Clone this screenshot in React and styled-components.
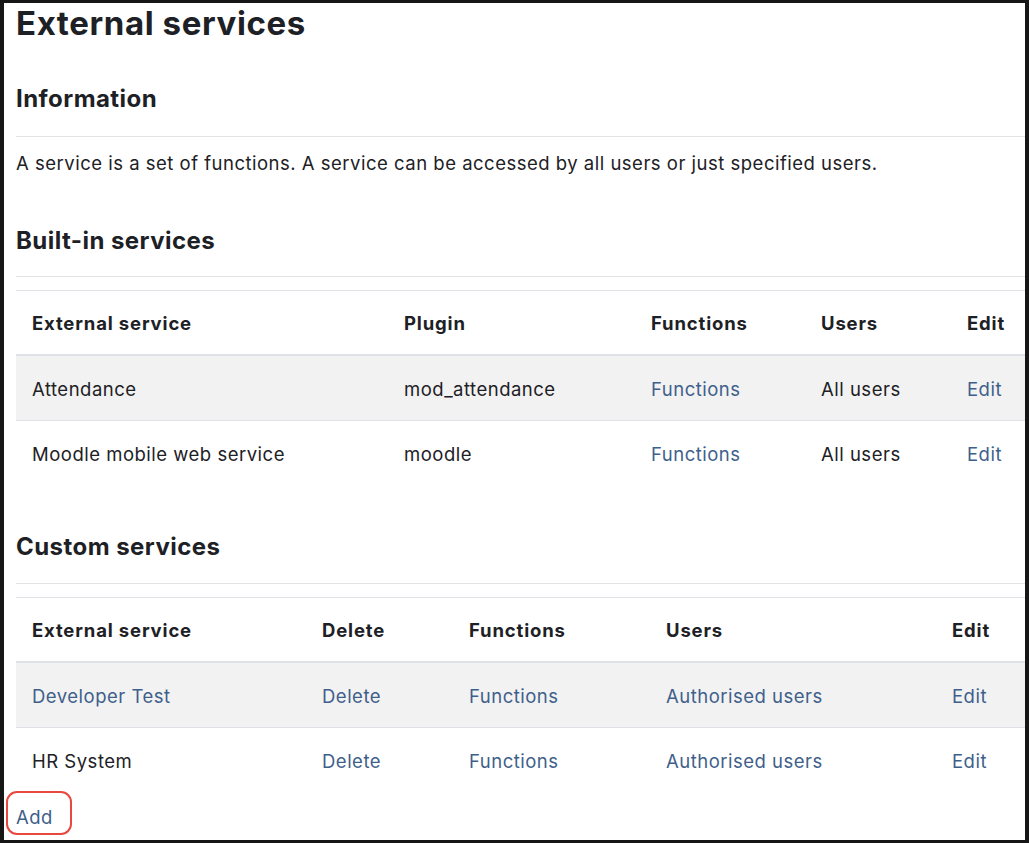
import React from "react";
import styled, { createGlobalStyle } from "styled-components";

const GlobalStyle = createGlobalStyle`
  html, body { margin: 0; padding: 0; background: #ffffff; }
  body {
    font-family: Inter, "Noto Sans", "Liberation Sans", sans-serif;
    color: #1d2125;
  }
  * { box-sizing: border-box; }
`;

const Frame = styled.div`
  width: 1029px;
  height: 843px;
  border-style: solid;
  border-color: #161616;
  border-width: 3px 4px 3px 4px;
  background: #ffffff;
  padding-left: 12px;
  overflow: hidden;
  position: relative;
`;

const PageTitle = styled.h2`
  margin: 0;
  font-size: 33px;
  line-height: 40px;
  font-weight: 700;
  letter-spacing: 0.6px;
`;

const SectionTitle = styled.h3`
  margin: ${(p) => p.$top}px 0 0;
  font-size: 24px;
  line-height: 29px;
  font-weight: 700;
  letter-spacing: 0.45px;
`;

const Rule = styled.hr`
  margin: ${(p) => p.$top}px 0 0;
  border: 0;
  border-top: 1px solid #e3e3e3;
`;

const Paragraph = styled.p`
  margin: 13px 0 0;
  font-size: 18.5px;
  line-height: 27px;
  letter-spacing: 0.5px;
`;

const Table = styled.table`
  margin-top: 13px;
  width: 1009px;
  table-layout: fixed;
  border-collapse: collapse;
  font-size: 18.5px;
  line-height: 27px;
  letter-spacing: 0.5px;
`;

const HeadCell = styled.th`
  text-align: left;
  font-weight: 700;
  letter-spacing: 0.85px;
  padding: 19px 16px 17px;
  border-top: 1px solid #dee2e6;
  border-bottom: 2px solid #dee2e6;
  white-space: nowrap;
`;

const Row = styled.tr`
  background: ${(p) => (p.$striped ? "#f2f2f2" : "transparent")};
`;

const Cell = styled.td`
  height: 65px;
  padding: 3px 16px 0;
  border-top: ${(p) => (p.$first ? "none" : "1px solid #dee2e6")};
  white-space: nowrap;
  vertical-align: middle;
`;

const Link = styled.a`
  color: #3f5f8b;
  text-decoration: none;
  cursor: pointer;
`;

const AddWrap = styled.div`
  position: relative;
  margin-top: 12px;
  font-size: 18.5px;
  line-height: 27px;
  letter-spacing: 0.5px;
  display: inline-block;
`;

const Annotation = styled.span`
  position: absolute;
  left: -10px;
  top: -13px;
  width: 66px;
  height: 44px;
  border: 2px solid #e8483e;
  border-radius: 11px;
  pointer-events: none;
`;

const builtIn = {
  cols: [372, 247, 170, 146, 74],
  head: ["External service", "Plugin", "Functions", "Users", "Edit"],
  rows: [
    [
      { t: "Attendance" },
      { t: "mod_attendance" },
      { t: "Functions", link: true },
      { t: "All users" },
      { t: "Edit", link: true },
    ],
    [
      { t: "Moodle mobile web service" },
      { t: "moodle" },
      { t: "Functions", link: true },
      { t: "All users" },
      { t: "Edit", link: true },
    ],
  ],
};

const custom = {
  cols: [290, 147, 197, 286, 89],
  head: ["External service", "Delete", "Functions", "Users", "Edit"],
  rows: [
    [
      { t: "Developer Test", link: true },
      { t: "Delete", link: true },
      { t: "Functions", link: true },
      { t: "Authorised users", link: true },
      { t: "Edit", link: true },
    ],
    [
      { t: "HR System" },
      { t: "Delete", link: true },
      { t: "Functions", link: true },
      { t: "Authorised users", link: true },
      { t: "Edit", link: true },
    ],
  ],
};

function ServiceTable({ data }) {
  return (
    <Table>
      <colgroup>
        {data.cols.map((w, i) => (
          <col key={i} style={{ width: w }} />
        ))}
      </colgroup>
      <thead>
        <tr>
          {data.head.map((h) => (
            <HeadCell key={h}>{h}</HeadCell>
          ))}
        </tr>
      </thead>
      <tbody>
        {data.rows.map((row, ri) => (
          <Row key={ri} $striped={ri % 2 === 0}>
            {row.map((c, ci) => (
              <Cell key={ci} $first={ri === 0}>
                {c.link ? <Link>{c.t}</Link> : c.t}
              </Cell>
            ))}
          </Row>
        ))}
      </tbody>
    </Table>
  );
}

export default function App() {
  return (
    <>
      <GlobalStyle />
      <Frame>
        <PageTitle>External services</PageTitle>
        <SectionTitle $top={41}>Information</SectionTitle>
        <Rule $top={23} />
        <Paragraph>
          A service is a set of functions. A service can be accessed by all users or just specified users.
        </Paragraph>
        <SectionTitle $top={49}>Built-in services</SectionTitle>
        <Rule $top={21} />
        <ServiceTable data={builtIn} />
        <SectionTitle $top={47}>Custom services</SectionTitle>
        <Rule $top={22} />
        <ServiceTable data={custom} />
        <AddWrap>
          <Link>Add</Link>
          <Annotation />
        </AddWrap>
      </Frame>
    </>
  );
}
